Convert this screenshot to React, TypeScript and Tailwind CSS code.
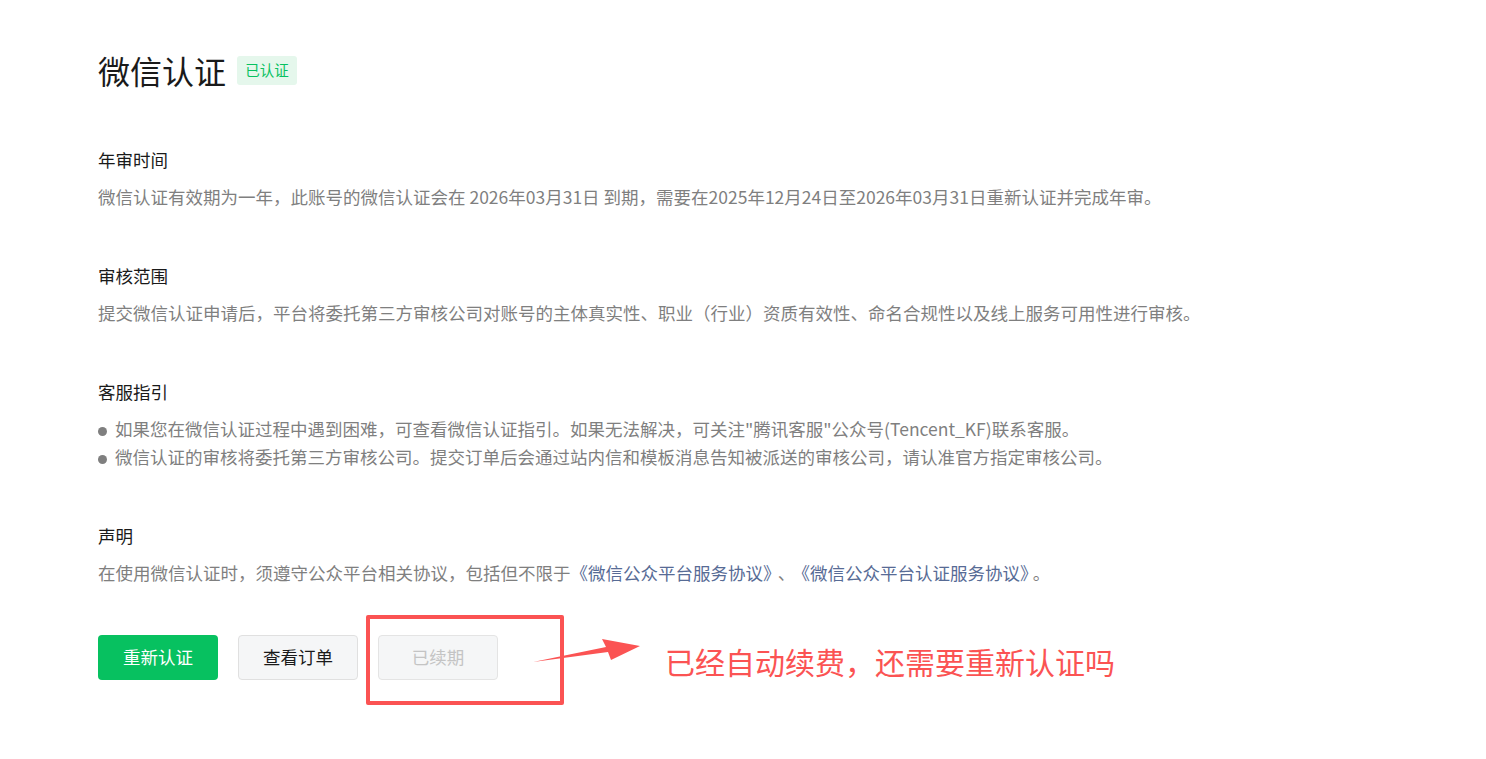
const font = { fontFamily: '"Noto Sans CJK SC", "Noto Sans", sans-serif' };

function Section({ title, children }: { title: string; children: React.ReactNode }) {
  return (
    <div className="mb-[51px]">
      <div className="text-[17.5px] leading-[28px] text-[#1a1a1a]">{title}</div>
      <div className="mt-[9px] text-[17.5px] leading-[28px] text-[#7f7f7f]">{children}</div>
    </div>
  );
}

function Dot() {
  return <span className="mr-[8px] inline-block h-[9px] w-[9px] rounded-full bg-[#7f7f7f] align-middle" />;
}

export default function App() {
  return (
    <div className="relative min-h-[759px] bg-white pl-[98px] pt-[50px]" style={font}>
      <div className="flex items-center">
        <h1 className="text-[32px] leading-[40px] text-[#1a1a1a]">微信认证</h1>
        <span className="ml-[11px] flex h-[29px] w-[60px] items-center justify-center rounded-[3px] bg-[#e5f7ec] text-[14.5px] text-[#07c160]">
          已认证
        </span>
      </div>

      <div className="mt-[56px]">
        <Section title="年审时间">
          微信认证有效期为一年，此账号的微信认证会在 2026年03月31日 到期，需要在2025年12月24日至2026年03月31日重新认证并完成年审。
        </Section>
        <Section title="审核范围">
          提交微信认证申请后，平台将委托第三方审核公司对账号的主体真实性、职业（行业）资质有效性、命名合规性以及线上服务可用性进行审核。
        </Section>
        <Section title="客服指引">
          <div>
            <Dot />
            如果您在微信认证过程中遇到困难，可查看微信认证指引。如果无法解决，可关注"腾讯客服"公众号(Tencent_KF)联系客服。
          </div>
          <div>
            <Dot />
            微信认证的审核将委托第三方审核公司。提交订单后会通过站内信和模板消息告知被派送的审核公司，请认准官方指定审核公司。
          </div>
        </Section>
        <div>
          <div className="text-[17.5px] leading-[28px] text-[#1a1a1a]">声明</div>
          <div className="mt-[9px] text-[17.5px] leading-[28px] text-[#7f7f7f]">
            在使用微信认证时，须遵守公众平台相关协议，包括但不限于
            <span className="text-[#576b95]">《微信公众平台服务协议》</span>
            <span className="mx-[6px]">、</span>
            <span className="text-[#576b95]">《微信公众平台认证服务协议》</span>
            <span className="ml-[4px]">。</span>
          </div>
        </div>
      </div>

      <div className="mt-[48px] flex gap-[20px]">
        <button className="h-[45px] w-[120px] rounded-[4px] bg-[#07c160] text-[17.5px] text-white">重新认证</button>
        <button className="h-[45px] w-[120px] rounded-[4px] border border-[#e0e0e0] bg-[#f5f6f7] text-[17.5px] text-[#1a1a1a]">
          查看订单
        </button>
        <button className="h-[45px] w-[120px] rounded-[4px] border border-[#e4e4e4] bg-[#f5f6f7] text-[17.5px] text-[#c4c4c4]">
          已续期
        </button>
      </div>

      {/* annotation */}
      <div className="absolute left-[366px] top-[615px] h-[90px] w-[198px] rounded-[2px] border-[4px] border-[#fb5353]" />
      <svg className="absolute left-[530px] top-[636px]" width="115" height="32" viewBox="0 0 115 32">
        <path d="M3 26 L78 16 L81 24 L110 10 L72 3 L76 11 Z" fill="#fb5353" />
      </svg>
      <div className="absolute left-[665px] top-[641px] text-[30px] leading-[40px] text-[#fb5353]">
        已经自动续费，还需要重新认证吗
      </div>
    </div>
  );
}
